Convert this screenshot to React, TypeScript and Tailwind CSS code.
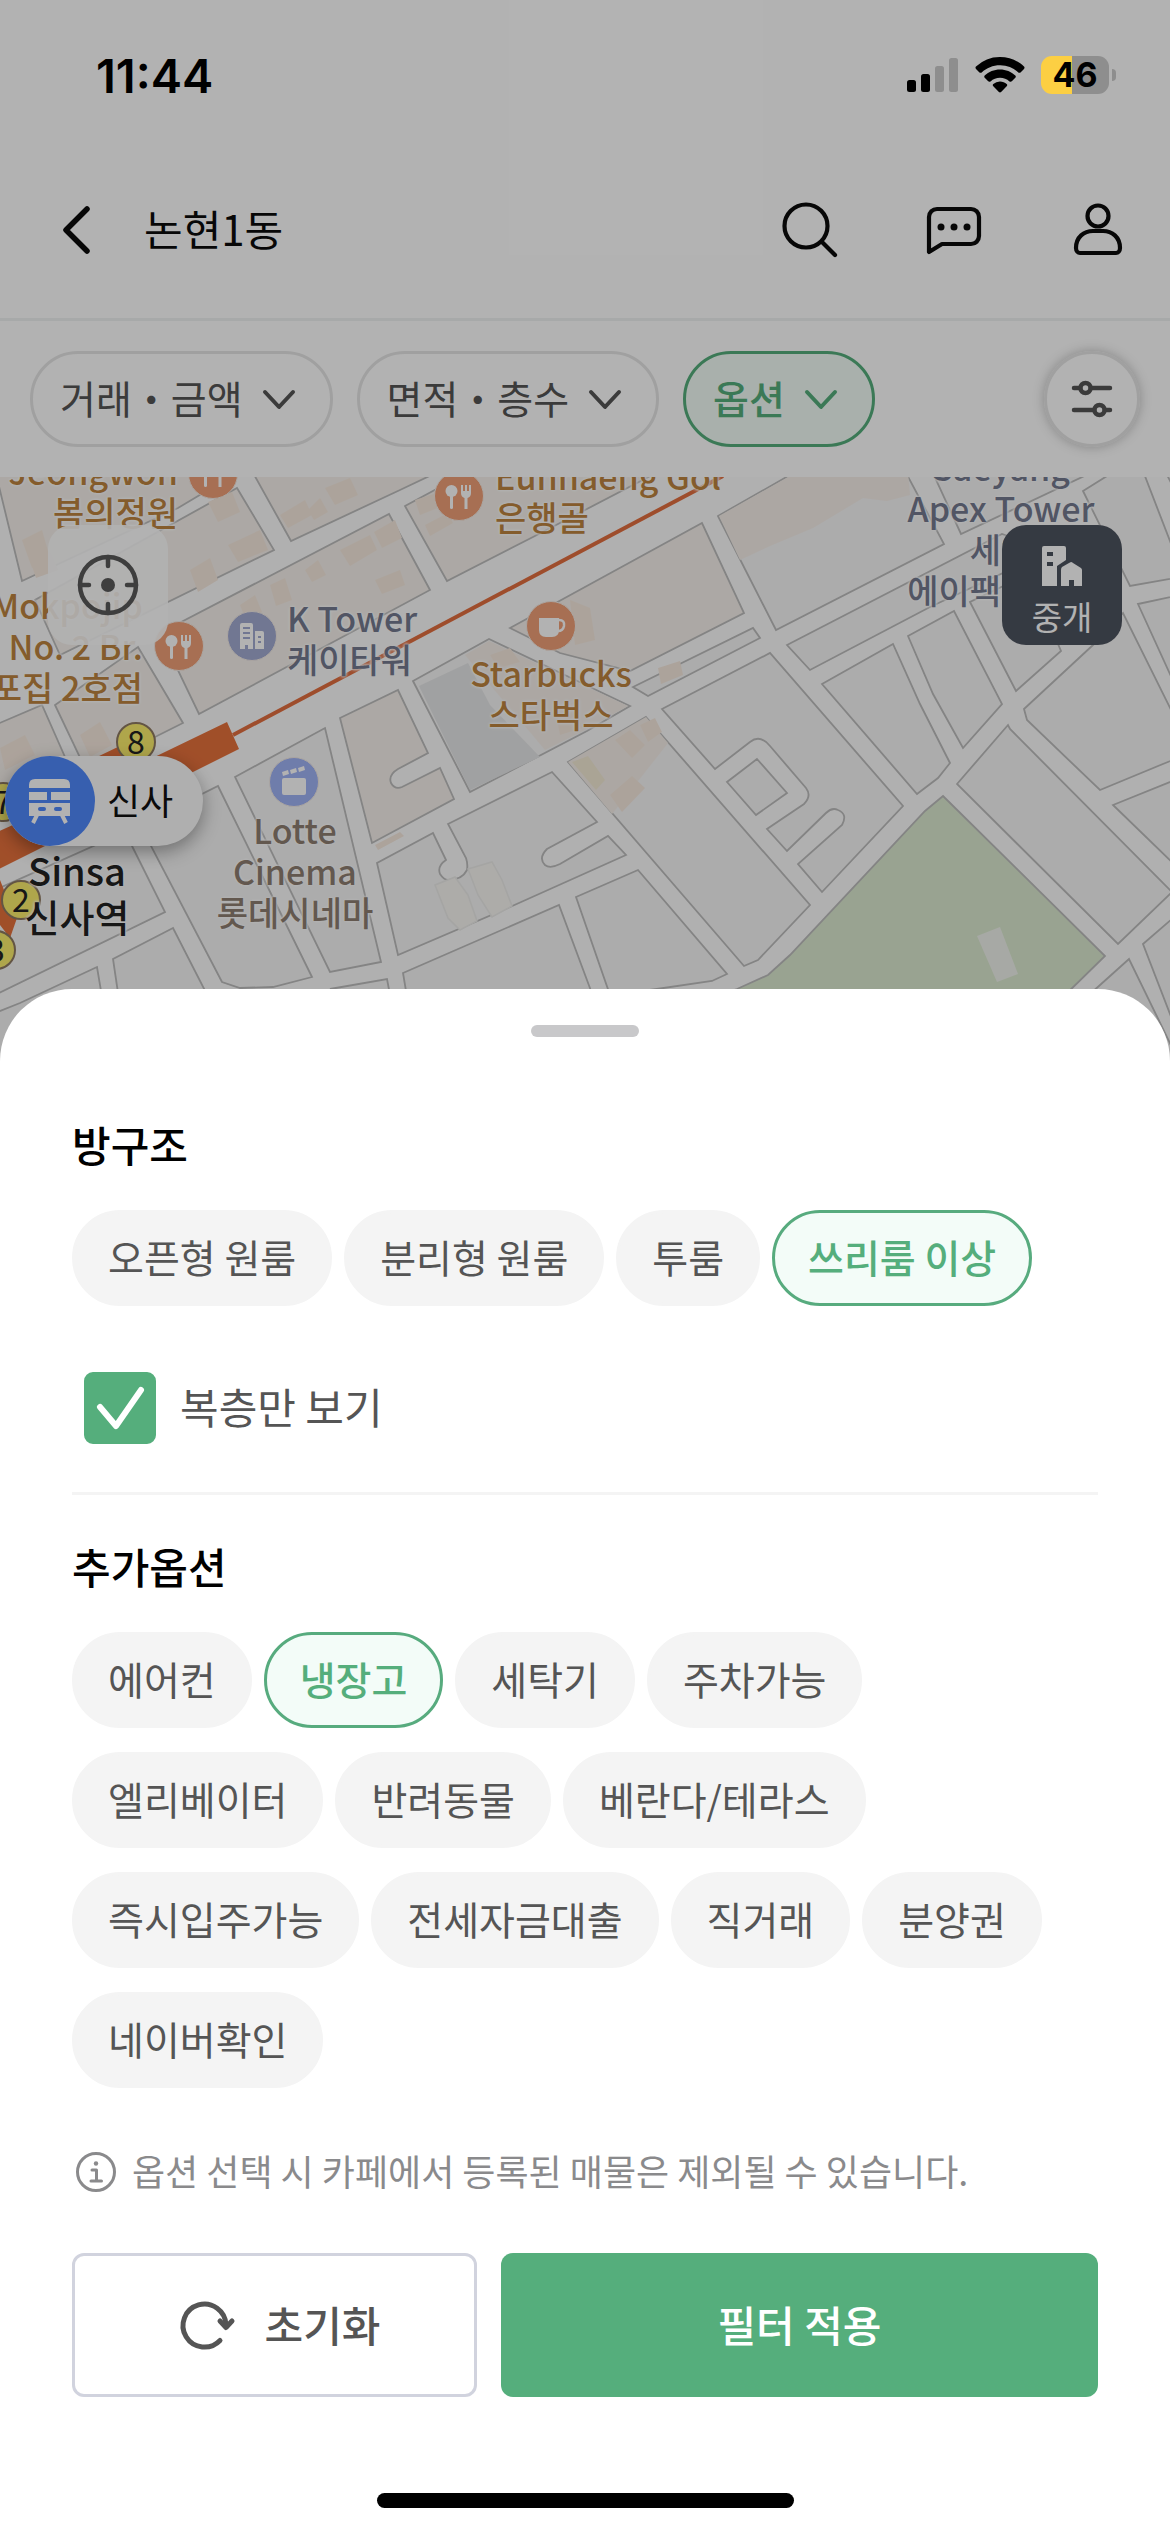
import { useState, type ReactNode } from "react";
import clsx from "clsx";

const ROOM_TYPES = ["오픈형 원룸", "분리형 원룸", "투룸", "쓰리룸 이상"];

const EXTRA_OPTIONS = [
  "에어컨",
  "냉장고",
  "세탁기",
  "주차가능",
  "엘리베이터",
  "반려동물",
  "베란다/테라스",
  "즉시입주가능",
  "전세자금대출",
  "직거래",
  "분양권",
  "네이버확인",
];

function toggle(list: string[], item: string) {
  return list.includes(item) ? list.filter((v) => v !== item) : [...list, item];
}

function StatusBar() {
  return (
    <div className="relative z-20 flex h-[141px] items-center justify-between pt-[9px] pr-[54px] pl-24">
      <span className="font-['Inter',sans-serif] text-[47px] leading-none font-semibold text-black">11:44</span>
      <div className="flex items-center gap-4">
        <svg className="h-[36px] w-[52px]" viewBox="0 0 52 36">
          <rect x="0" y="23" width="9" height="12" rx="2.5" />
          <rect x="14" y="17" width="9" height="18" rx="2.5" />
          <rect x="28" y="9" width="9" height="26" rx="2.5" fill="#8e8e8e" />
          <rect x="42" y="1" width="9" height="34" rx="2.5" fill="#8e8e8e" />
        </svg>
        <svg className="h-[36px] w-[50px]" viewBox="0 0 50 36">
          <path d="M25 0c9.300 0 17.800 3.600 24 9.600.7.600.7 1.600 0 2.300l-3.500 3.500c-.6.600-1.600.6-2.200 0A26.200 26.200 0 0 0 25 8.200c-7 0-13.500 2.700-18.300 7.200-.6.600-1.600.6-2.200 0L1 11.900c-.7-.7-.7-1.700 0-2.300A34.500 34.500 0 0 1 25 0z" />
          <path d="M25 12.500c5.900 0 11.300 2.300 15.300 6 .7.600.7 1.700 0 2.300l-3.500 3.500c-.6.600-1.600.6-2.300.1a14 14 0 0 0-19 0c-.7.500-1.700.5-2.300-.1l-3.500-3.500c-.6-.6-.6-1.700 0-2.300 4-3.700 9.400-6 15.300-6z" />
          <path d="M25 24.500c2.600 0 4.900.9 6.700 2.500.7.600.7 1.600 0 2.300l-5.600 5.800c-.6.600-1.600.6-2.200 0l-5.600-5.800c-.7-.7-.7-1.700 0-2.300a10 10 0 0 1 6.700-2.500z" />
        </svg>
        <div className="flex items-center gap-[3px]">
          <div className="flex h-[38px] w-[68px] items-center justify-center rounded-[11px] bg-[linear-gradient(90deg,#fccf43_46%,#8e8e8e_46%)] font-['Inter',sans-serif] text-[34px] leading-none font-bold text-black">
            46
          </div>
          <div className="h-3 w-1 rounded-r-full bg-[#8e8e8e]" />
        </div>
      </div>
    </div>
  );
}

function Header() {
  return (
    <header className="flex h-[180px] items-center border-b-[3px] border-[#f0f2f2] pr-9 pl-12">
      <button type="button" aria-label="뒤로" className="w-[60px]">
        <svg className="size-[60px]" viewBox="0 0 60 60" fill="none" stroke="#0b0b0b" strokeWidth="5.500" strokeLinecap="round" strokeLinejoin="round">
          <path d="M39 9 18 30l21 21" />
        </svg>
      </button>
      <h1 className="ml-9 flex-1 pb-1 text-[42px] leading-[60px] text-[#0b0b0b]">논현1동</h1>
      <div className="flex gap-[72px]">
        <button type="button" aria-label="검색">
          <svg className="size-[72px]" viewBox="0 0 72 72" fill="none" stroke="#0b0b0b" strokeWidth="4.200" strokeLinecap="round">
            <circle cx="32" cy="32" r="21.500" />
            <path d="m48 48 13 13" />
          </svg>
        </button>
        <button type="button" aria-label="채팅">
          <svg className="size-[72px]" viewBox="0 0 72 72" fill="none" stroke="#0b0b0b" strokeWidth="4.200" strokeLinejoin="round">
            <path d="M11 58V23a8 8 0 0 1 8-8h34a8 8 0 0 1 8 8v19a8 8 0 0 1-8 8H24z" />
            <g fill="#0b0b0b" stroke="none">
              <circle cx="23" cy="33" r="3.500" />
              <circle cx="36" cy="33" r="3.500" />
              <circle cx="49" cy="33" r="3.500" />
            </g>
          </svg>
        </button>
        <button type="button" aria-label="내 정보">
          <svg className="size-[72px]" viewBox="0 0 72 72" fill="none" stroke="#0b0b0b" strokeWidth="4.200" strokeLinejoin="round">
            <circle cx="36" cy="22" r="10.500" />
            <path d="M14 54c0-11 8-17 17-17h10c9 0 17 6 17 17 0 3-2 5-4 5H18c-2 0-4-2-4-5z" />
          </svg>
        </button>
      </div>
    </header>
  );
}

function FilterButton({ label, active }: { label: string; active?: boolean }) {
  return (
    <button
      type="button"
      className={clsx(
        "flex h-24 items-center gap-3 rounded-full border-[3px] px-[27px] text-[39px] whitespace-nowrap",
        active ? "border-[#55ae7c] bg-[#f2fcf6] font-medium text-[#55ae7c]" : "border-[#e6e6e6] text-[#555]",
      )}
    >
      <span className="pb-1">{label}</span>
      <svg className="size-12" viewBox="0 0 48 48" fill="none" stroke="currentColor" strokeWidth="4" strokeLinecap="round" strokeLinejoin="round">
        <path d="m10 17 14 15 14-15" />
      </svg>
    </button>
  );
}

function FilterBar() {
  return (
    <div className="flex items-center gap-6 p-[30px]">
      <FilterButton label="거래・금액" />
      <FilterButton label="면적・층수" />
      <FilterButton label="옵션" active />
      <button
        type="button"
        aria-label="전체 필터"
        className="ml-auto flex size-24 items-center justify-center rounded-full border-[3px] border-[#e6e6e6] shadow-[0_0_12px_rgba(0,0,0,0.25)]"
      >
        <svg className="size-12" viewBox="0 0 48 48" fill="none" stroke="#555" strokeWidth="4.500" strokeLinecap="round">
          <path d="M6 13h6M23 13h19M6 35h20M37 35h5" />
          <circle cx="17.500" cy="13" r="5" />
          <circle cx="31.500" cy="35" r="5" />
        </svg>
      </button>
    </div>
  );
}

function MapTiles() {
  return (
    <svg className="block h-full w-full" viewBox="0 477 1170 597" preserveAspectRatio="xMinYMin slice">
      <rect y="477" width="1170" height="597" fill="#fdfdfd" />
      {/* city blocks */}
      <g fill="#f6f6f6" stroke="#bdbdbd" strokeWidth="1.800">
        <path d="M718 516 797 471H905L944 544 776 630z" />
        <path d="M932 471 961 534 1095 471z" />
        <path d="M787 645 1002 534 1050 551 930 607 810 670z" />
        <path d="M822 684 893 644 920 704 950 763 938 778 917 794z" />
        <path d="M908 636 954 611 1002 704 963 748 933 694z" />
        <path d="M970 602 1016 691 1061 651 1055 637 1020 578z" />
        <path d="M1024 709 1093 645 1123 613 1180 728V757L1100 790 1027 720z" />
        <path d="M1083 491 1115 471H1143L1180 567V577L1130 586z" />
        <path d="M1165 471 1180 500V471z" />
        <path d="M1138 604 1180 595V696z" />
        <path d="M1113 805 1180 778V870z" />
        <path d="M957 784 1008 725 1010 729 1172 892 1118 944z" />
        <path d="M1143 944 1180 912V1040z" />
        <path d="M1129 959 1080 1003V1074H1185z" />
        <path d="M662 709 770 653 903 806 822 892 798 864 842 825Q848 814 838 810 832 807 826 813L787 851 767 829 804 804Q812 796 806 788L770 746Q760 734 750 742L715 769z" />
        <path d="M757 759 787 793 756 815 727 782z" />
        <path d="M646 717 810 905 758 960 744 966 568 762z" />
        <path d="M413 681 489 639 630 706 587 731 470 792z" />
        <path d="M633 687 753 628 760 638 648 696z" />
        <path d="M448 824 552 772 597 822 547 849Q538 858 545 865 550 869 560 864L608 836 626 855 510 907 398 955 377 863 433 833 446 860Q437 866 440 874 444 880 448 880 462 880 467 870 468 864 466 858z" />
        <path d="M403 973 559 905 600 1015H410z" />
        <path d="M576 897 638 870 727 974 712 981 650 990 610 995z" />
        <path d="M235 777 325 728 381 962 330 972z" />
        <path d="M218 786 312 977 273 987 240 988 222 982 140 825z" />
        <path d="M125 832 165 912-5 995V890z" />
        <path d="M173 928 113 959 122 1020H220z" />
        <path d="M97 967 20 1003-5 1013V1074H115z" />
        <path d="M330 989 387 979 392 1005z" />
      </g>
      {/* commercial blocks */}
      <g fill="#f6f1ec" stroke="#bdbdbd" strokeWidth="1.800">
        <path d="M510 628 702 523 744 613 630 671 560 653z" />
        <path d="M405 506 470 471H660L533 537 447 581z" />
        <path d="M252 471 291 541 400 490 440 471z" />
        <path d="M-5 470 22 581 178 508 240 471z" />
        <path d="M237 488 274 550 60 655 35 600z" />
        <path d="M138 647 183 723 157 736 85 768 55 705z" />
        <path d="M-5 725 42 705 65 757-5 790z" />
        <path d="M160 633 389 514 430 590 199 714z" />
        <path d="M340 718 398 690 428 753 398 769Q388 775 391 783 395 790 402 787L440 768 454 799 372 843z" />
      </g>
      <g fill="#f6f0ea">
        <path d="M719 516 797 472H908L910 495 887 501 863 498 813 528 770 546 740 560z" />
        <path d="M568 762 646 717 668 743 612 814z" />
        <path d="M489 641 628 706 587 729 545 750 465 655z" />
      </g>
      <path d="M419 686 468 663 490 705 540 757 470 790z" fill="#e6e7e8" />
      {/* buildings */}
      <g fill="#f7eadf">
        <path d="M280 515 305 500 312 515 288 528zM308 510 320 498 328 512 314 520zM325 488 350 478 358 495 335 505z" />
        <path d="M228 545 260 530 268 550 238 562zM190 570 210 558 218 580 198 592zM208 502 232 492 240 512 218 522z" />
        <path d="M340 550 370 535 377 550 350 566zM374 532 395 520 402 538 382 548zM375 580 400 570 405 585 382 594z" />
        <path d="M305 570 318 560 326 575 312 582zM270 585 285 578 292 600 276 606zM240 605 255 595 262 612 246 620z" />
        <path d="M22 540 42 530 50 558 32 568zM30 560 50 552 58 570 36 578zM570 600 590 608 595 640 575 645z" />
        <path d="M425 525 448 513 453 523 430 536zM415 500 440 492 445 505 420 515zM375 845 400 832 404 836 378 850z" />
        <path d="M658 668 680 661 683 675 661 684zM615 740 630 730 645 745 632 758zM610 795 632 776 645 788 622 812z" />
        <path d="M490 655 510 648 520 662 498 668zM555 710 575 702 582 728 560 735zM640 725 655 718 662 732 648 742z" />
        <path d="M80 735 100 722 112 745 90 757zM0 748 25 735 35 755 5 770z" />
      </g>
      <path d="M572 762 588 756 605 780 596 790z" fill="#f4ebd6" />
      <g fill="#f8f6f3" stroke="#ececea" strokeWidth="1.500">
        <path d="M435 885 455 877 468 895 477 921 460 930 448 918z" />
        <path d="M468 869 492 862 502 880 512 906 492 917 478 895z" />
      </g>
      {/* park */}
      <path d="M943 796 1105 956 1060 1000H700L737 989 768 975 790 955 925 811z" fill="#dbead0" stroke="#bdbdbd" strokeWidth="1.800" />
      <path d="M977 936 1000 927 1018 974 997 982z" fill="#f0f3ec" />
      {/* subway line */}
      <path d="M233 735 723 476" stroke="#e36f40" strokeWidth="4" />
      <path d="M227 722 239 749-5 871V833L93 789 97 757 122 745 138 765z" fill="#e6713c" />
      <path d="M0 880 10 905 17 918 10 938 0 925z" fill="#e6713c" />
    </svg>
  );
}

function Pin({ className, children }: { className: string; children: ReactNode }) {
  return (
    <svg className={clsx("absolute size-[50px]", className)} viewBox="0 0 50 50">
      <circle cx="25" cy="25" r="24.500" fill="currentColor" stroke="#f4ece6" strokeWidth="1" />
      <g fill="#fff">{children}</g>
    </svg>
  );
}

function RestaurantPin({ className }: { className: string }) {
  return (
    <Pin className={clsx("text-[#f0a078]", className)}>
      <circle cx="17.500" cy="20" r="6" />
      <rect x="16" y="24" width="3" height="14" rx="1.500" />
      <path d="M27 14h2v6h2v-6h2v6h2v-6h2v8q0 4-3.500 5v11h-3V27q-3.500-1-3.500-5z" />
    </Pin>
  );
}

function PlaceLabel({ className, lines }: { className: string; lines: string[] }) {
  return (
    <div
      className={clsx(
        "absolute whitespace-nowrap [text-shadow:0_0_3px_#fff,0_0_3px_#fff,0_0_4px_#fff]",
        className,
      )}
    >
      {lines.map((line) => (
        <div key={line}>{line}</div>
      ))}
    </div>
  );
}

function ExitMarker({ className, no }: { className: string; no: number }) {
  return (
    <span
      className={clsx(
        "absolute flex size-10 items-center justify-center rounded-full border-2 border-[#8f7a62] bg-[#fbee6c] pb-1 text-[32px] leading-none text-[#222]",
        className,
      )}
    >
      {no}
    </span>
  );
}

function MapView() {
  return (
    <div className="relative flex-1 overflow-hidden">
      <div className="absolute inset-0">
        <MapTiles />
      </div>

      <RestaurantPin className="top-[-28px] left-[188px]" />
      <RestaurantPin className="top-[144px] left-[154px]" />
      <RestaurantPin className="top-[-6px] left-[434px]" />
      <Pin className="top-[134px] left-[227px] text-[#a3abd2]">
        <path d="M13 14q0-2 2-2h9q2 0 2 2v24h-5v-4h-3v4h-5z" />
        <path d="M28 20h7q2 0 2 2v16h-9z" />
        <path d="M16 17h7M16 22h7M16 27h7M31 26h3M31 31h3" stroke="#a3abd2" strokeWidth="2" />
      </Pin>
      <Pin className="top-[124px] left-[526px] text-[#f0a078]">
        <path d="M13 17h20v12q0 7-7 7h-6q-7 0-7-7z" />
        <path d="M33 19q6 0 5 6-1 5-6 5" fill="none" stroke="#fff" strokeWidth="2.500" />
      </Pin>
      <Pin className="top-[280px] left-[269px] text-[#a0b3f5]">
        <rect x="13" y="21" width="24" height="17" rx="2" />
        <path d="m13 15 6-2 1 4-6 2zM21 13l6-2 1 4-6 2zM29 11l6-2 1 4-6 2z" />
      </Pin>

      <div className="text-[34px] leading-[41px] font-medium text-[#bd8440]">
        <PlaceLabel className="top-[-27px] right-[calc(100%-178px)] text-right" lines={["Jeongwon", "봄의정원"]} />
        <PlaceLabel className="top-[107px] right-[calc(100%-143px)] text-right" lines={["Mokpojip", "No. 2 Br.", "목포집 2호점"]} />
        <PlaceLabel className="top-[-22px] left-[495px]" lines={["Eunhaeng Gol", "은행골"]} />
        <PlaceLabel className="top-[175px] left-[551px] -translate-x-1/2 text-center" lines={["Starbucks", "스타벅스"]} />
        <PlaceLabel className="top-[120px] left-[287px] text-[#757a90]" lines={["K Tower", "케이타워"]} />
        <PlaceLabel
          className="top-[-31px] left-[1001px] -translate-x-1/2 text-center text-[#757a90]"
          lines={["Saeyang", "Apex Tower", "세양", "에이팩스타워"]}
        />
        <PlaceLabel className="top-[332px] left-[295px] -translate-x-1/2 text-center text-[#8f7f71]" lines={["Lotte", "Cinema", "롯데시네마"]} />
      </div>

      <ExitMarker className="top-[245px] left-[116px]" no={8} />
      <ExitMarker className="top-[305px] left-[-17px]" no={7} />
      <ExitMarker className="top-[403px] left-[1px]" no={2} />
      <ExitMarker className="top-[453px] left-[-24px]" no={3} />

      <PlaceLabel
        className="top-[370px] left-[77px] -translate-x-1/2 text-center text-[38px] leading-[46px] font-medium text-[#222]"
        lines={["Sinsa", "신사역"]}
      />

      <button
        type="button"
        className="absolute top-[279px] left-[5px] flex h-[90px] items-center gap-3 rounded-full bg-[#fbfbfb] pr-[30px] text-[36px] text-[#111] shadow-[0_6px_18px_rgba(0,0,0,0.35)]"
      >
        <svg className="size-[90px]" viewBox="0 0 90 90">
          <circle cx="45" cy="45" r="45" fill="#5088fb" />
          <g fill="#fff">
            <path d="M24 32v-3q0-6 6-6h29q6 0 6 6v3zM24 36h18v8H24zM46 36h19v8H46z" />
            <path d="M24 47h41v13H24z" />
            <path d="m32 59-4 8M57 59l4 8" stroke="#fff" strokeWidth="4" />
          </g>
          <rect x="33" y="51" width="8" height="4" rx="2" fill="#5088fb" />
          <rect x="49" y="51" width="8" height="4" rx="2" fill="#5088fb" />
        </svg>
        <span className="pb-1">신사</span>
      </button>

      <button
        type="button"
        aria-label="현재 위치"
        className="absolute top-12 left-12 flex size-[120px] items-center justify-center rounded-3xl bg-white/90"
      >
        <svg className="size-[66px]" viewBox="0 0 66 66" fill="none" stroke="#5a5a5a" strokeWidth="4.500" strokeLinecap="round">
          <circle cx="33" cy="33" r="28" />
          <path d="M33 5v9M33 52v9M5 33h9M52 33h9" />
          <circle cx="33" cy="33" r="7" fill="#5a5a5a" stroke="none" />
        </svg>
      </button>

      <button
        type="button"
        className="absolute top-12 right-12 flex size-[120px] flex-col items-center justify-center gap-2 rounded-3xl bg-[#4d535f] pt-3 text-[33px] leading-[42px] text-white"
      >
        <svg className="size-[42px] shrink-0" viewBox="0 0 42 42" fill="#fff">
          <path
            fillRule="evenodd"
            d="M3 1h20q2 0 2 2v12l-9 6v20H1V3q0-2 2-2zM6 7v4h6V7zM6 17v4h6v-4z"
          />
          <path fillRule="evenodd" d="M30 17q1 0 2 1l8 5q1 1 1 2v16H20V25q0-2 1-3l7-4zM28 35v6h5v-6z" />
        </svg>
        중개
      </button>
    </div>
  );
}

function Chip({ label, selected, onClick }: { label: string; selected: boolean; onClick: () => void }) {
  return (
    <button
      type="button"
      aria-pressed={selected}
      onClick={onClick}
      className={clsx(
        "h-24 rounded-full border-[3px] px-[33px] pb-1 text-[39px] whitespace-nowrap",
        selected ? "border-[#57ab7e] bg-[#f3fcf8] font-medium text-[#55ae7c]" : "border-[#f4f4f4] bg-[#f4f4f4] text-[#555]",
      )}
    >
      {label}
    </button>
  );
}

function FilterSheet() {
  const [rooms, setRooms] = useState(["쓰리룸 이상"]);
  const [options, setOptions] = useState(["냉장고"]);
  const [duplexOnly, setDuplexOnly] = useState(true);

  function handleReset() {
    setRooms([]);
    setOptions([]);
    setDuplexOnly(false);
  }

  return (
    <section className="relative z-20 -mt-[84px] rounded-t-[72px] bg-white px-[72px] pt-9 pb-6">
      <div className="mx-auto h-3 w-[108px] rounded-full bg-[#c8c8ca]" />

      <h2 className="mt-[77px] text-[42px] leading-[60px] font-medium text-black">방구조</h2>
      <div className="mt-9 flex flex-wrap gap-x-3 gap-y-6">
        {ROOM_TYPES.map((room) => (
          <Chip key={room} label={room} selected={rooms.includes(room)} onClick={() => setRooms(toggle(rooms, room))} />
        ))}
      </div>

      <label className="mt-[66px] ml-3 flex w-fit items-center gap-6 text-[42px] leading-[60px] text-[#555]">
        <span className="grid size-[72px]">
          <input
            type="checkbox"
            checked={duplexOnly}
            onChange={(e) => setDuplexOnly(e.target.checked)}
            className="col-start-1 row-start-1 size-full appearance-none rounded-[9px] border-[3px] border-[#d1d3de] checked:border-[#55ae7c] checked:bg-[#55ae7c]"
          />
          <svg
            className="pointer-events-none col-start-1 row-start-1 size-full"
            viewBox="0 0 72 72"
            fill="none"
            stroke="#fff"
            strokeWidth="6"
            strokeLinecap="round"
            strokeLinejoin="round"
          >
            <path d="m16 35 16 19 25-36" />
          </svg>
        </span>
        <span className="pb-1">복층만 보기</span>
      </label>

      <hr className="mt-12 border-t-[3px] border-[#f4f4f4]" />

      <h2 className="mt-[41px] text-[42px] leading-[60px] font-medium text-black">추가옵션</h2>
      <div className="mt-9 flex flex-wrap gap-x-3 gap-y-6">
        {EXTRA_OPTIONS.map((option) => (
          <Chip
            key={option}
            label={option}
            selected={options.includes(option)}
            onClick={() => setOptions(toggle(options, option))}
          />
        ))}
      </div>

      <p className="mt-[60px] flex h-12 items-center gap-3 text-[36px] leading-[48px] text-[#8a8a8c]">
        <svg className="size-12 shrink-0" viewBox="0 0 48 48" fill="none" stroke="currentColor" strokeWidth="3" strokeLinecap="round" strokeLinejoin="round">
          <circle cx="24" cy="24" r="18.500" />
          <path d="M20 22h4.500v11M19 33h10.500" />
          <circle cx="24" cy="15.500" r="2.200" fill="currentColor" stroke="none" />
        </svg>
        <span className="pb-1">옵션 선택 시 카페에서 등록된 매물은 제외될 수 있습니다.</span>
      </p>

      <div className="mt-[57px] flex gap-6">
        <button
          type="button"
          onClick={handleReset}
          className="flex h-36 w-[405px] items-center justify-center gap-6 rounded-xl border-[3px] border-[#d1d3de] text-[42px] font-medium text-[#555]"
        >
          <svg className="size-[72px]" viewBox="0 0 72 72" fill="none" stroke="currentColor" strokeWidth="5" strokeLinecap="round" strokeLinejoin="round">
            <path d="M51 51.500A21.500 21.500 0 1 1 57 36" />
            <path d="m51 32 6 6.500 6-6.500" />
          </svg>
          <span className="pb-1">초기화</span>
        </button>
        <button type="button" className="h-36 flex-1 rounded-xl bg-[#55ae7c] pb-1 text-[42px] font-medium text-white">
          필터 적용
        </button>
      </div>

      <div className="mx-auto mt-24 h-[15px] w-[417px] rounded-full bg-black" />
    </section>
  );
}

export default function App() {
  return (
    <main className="relative flex min-h-screen flex-col bg-white font-['Noto_Sans_CJK_KR',sans-serif]">
      <StatusBar />
      <Header />
      <FilterBar />
      <MapView />
      <div className="absolute inset-0 z-10 bg-black/30" />
      <FilterSheet />
    </main>
  );
}
